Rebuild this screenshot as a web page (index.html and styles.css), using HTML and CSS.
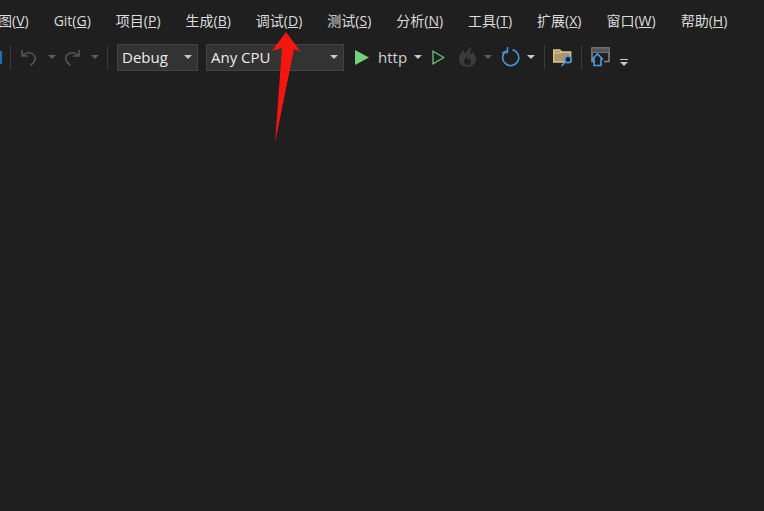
FILE: index.html
```html
<!DOCTYPE html>
<html lang="zh-CN">
<head>
    <meta charset="UTF-8">
    <meta name="viewport" content="width=device-width, initial-scale=1.0">
    <title>Visual Studio</title>
    <link rel="stylesheet" href="styles.css">
</head>
<body>
    <!-- Menu -->
    <nav class="menubar">
        <span class="menu-item">视图(<u>V</u>)</span>
        <span class="menu-item">Git(<u>G</u>)</span>
        <span class="menu-item">项目(<u>P</u>)</span>
        <span class="menu-item">生成(<u>B</u>)</span>
        <span class="menu-item">调试(<u>D</u>)</span>
        <span class="menu-item">测试(<u>S</u>)</span>
        <span class="menu-item">分析(<u>N</u>)</span>
        <span class="menu-item">工具(<u>T</u>)</span>
        <span class="menu-item">扩展(<u>X</u>)</span>
        <span class="menu-item">窗口(<u>W</u>)</span>
        <span class="menu-item">帮助(<u>H</u>)</span>
    </nav>

    <!-- Toolbar -->
    <div class="toolbar">
        <span class="blue-edge"></span>
        <span class="sep sep-first"></span>
        <svg class="icon undo" width="16" height="18" viewBox="0 0 16 18"><path d="M1 2v6h6M1.500 8C4 4.500 9 3.500 12.500 6.500c3 3 2.500 6.500-3 11" fill="none" stroke="#555" stroke-width="1.600"/></svg>
        <span class="caret caret-dim caret-undo"></span>
        <svg class="icon redo" width="16" height="18" viewBox="0 0 16 18"><path d="M15 2v6H9M14.500 8C12 4.500 7 3.500 3.500 6.500c-3 3-2.500 6.500 3 11" fill="none" stroke="#555" stroke-width="1.600"/></svg>
        <span class="caret caret-dim caret-redo"></span>
        <span class="sep sep-undo"></span>
        <div class="select select-debug">
            <span>Debug</span>
            <span class="caret"></span>
        </div>
        <div class="select select-cpu">
            <span>Any CPU</span>
            <span class="caret"></span>
        </div>
        <svg class="icon play" width="14" height="15" viewBox="0 0 14 15"><path d="M0 0l14 7.500L0 15z" fill="#73d17c"/></svg>
        <span class="run-target">http</span>
        <span class="caret caret-http"></span>
        <svg class="icon play-outline" width="13" height="15" viewBox="0 0 13 15"><path d="M1 1.200L11.800 7.500 1 13.800z" fill="none" stroke="#6cc070" stroke-width="1.300"/></svg>
        <svg class="icon flame" width="18" height="20" viewBox="0 0 18 20"><path d="M13 0C8 2 9 5 6 6 5 5 5 4 5 3 1 6 0 9 0 12c0 5 4 8 8 8 5 0 9-3 9-8 0-3-2-5-3-7-1 1-2 2-3 2 0-3 1-5 2-7z" fill="#3b3b3b"/><path d="M8 10c-2 2-3 3-3 5s2 3 4 3 3-2 3-3c0-2-1-3-2-4l-1 2z" fill="#1f1f1f"/></svg>
        <span class="caret caret-dim caret-flame"></span>
        <svg class="icon refresh" width="19" height="20" viewBox="0 0 19 20"><path d="M5.500 3.800a8 8 0 1 0 6-1" fill="none" stroke="#4a94dc" stroke-width="1.600"/><path d="M6.500 0v5.500H1" fill="none" stroke="#4a94dc" stroke-width="1.500"/></svg>
        <span class="caret caret-refresh"></span>
        <span class="sep sep-refresh"></span>
        <svg class="icon folder" width="20" height="19" viewBox="0 0 20 19"><path d="M.7 2h6l2 2h9v10H.7z" fill="#a8986f" stroke="#e2c88e" stroke-width="1.300"/><path d="M1 5h7l1.500-1" fill="none" stroke="#e2c88e"/><circle cx="15" cy="11.500" r="3.200" fill="#1f1f1f" stroke="#4a9cea" stroke-width="1.500"/><path d="M12.500 14l-4 4" stroke="#4a9cea" stroke-width="1.600"/></svg>
        <span class="sep sep-folder"></span>
        <svg class="icon window" width="19" height="20" viewBox="0 0 19 20"><path d="M6 14.500H1V1h17v13.500h-5M1 5h17" fill="none" stroke="#8a8a8a" stroke-width="1.500"/><path d="M1 1.500h17v3.500H1z" fill="#555"/><path d="M1 12.500l5.500-5.500 5.500 5.500M3 11.500v7h7v-7" fill="#1f1f1f" stroke="#4a9cea" stroke-width="1.600"/></svg>
        <span class="overflow">
            <span class="overflow-line"></span>
            <span class="caret"></span>
        </span>
    </div>

    <!-- Flecha roja encima de la captura -->
    <svg class="arrow" width="28" height="112" viewBox="0 0 28 112"><path d="M14 1L29 21 22 18 3 112 10 17 0 20z" fill="#f5170f"/></svg>
</body>
</html>
```

FILE: styles.css
```css
body {
    margin: 0;
    height: 511px;
    overflow: hidden;
    position: relative;
    background-color: #1f1f1f;
    font-family: "Open Sans", "Noto Sans CJK SC", sans-serif;
    color: #dcdcdc;
}

.menubar {
    display: flex;
    gap: 25px;
    height: 42px;
    margin-left: -16px;
    padding-top: 11px;
    box-sizing: border-box;
    font-size: 14px;
    line-height: 20px;
    white-space: nowrap;
}

.toolbar {
    display: flex;
    align-items: center;
    height: 28px;
    margin-top: 1px;
    white-space: nowrap;
}

.icon {
    flex: none;
}

.blue-edge {
    width: 2px;
    height: 13px;
    background-color: #1e6fb8;
}

.sep {
    width: 1px;
    height: 24px;
    background-color: #3a3a3a;
}

.sep-first { margin-left: 8px; }
.sep-undo { margin-left: 8px; }
.sep-refresh { margin-left: 9px; }
.sep-folder { margin-left: 8px; }

.caret {
    width: 0;
    height: 0;
    border-left: 4px solid transparent;
    border-right: 4px solid transparent;
    border-top: 4px solid #c8c8c8;
}

.caret-dim { border-top-color: #5c5c5c; }

.undo { margin-left: 10px; }
.caret-undo { margin-left: 11px; }
.redo { margin-left: 8px; }
.caret-redo { margin-left: 11px; }

.select {
    display: flex;
    align-items: center;
    justify-content: space-between;
    height: 27px;
    box-sizing: border-box;
    padding: 0 5px 0 4px;
    background-color: #333;
    border: 1px solid #434343;
    font-size: 15px;
    color: #ececec;
}

.select-debug {
    width: 81px;
    margin-left: 9px;
}

.select-cpu {
    width: 138px;
    margin-left: 8px;
}

.play { margin-left: 11px; }

.run-target {
    margin-left: 9px;
    font-size: 15px;
    color: #d0d0d0;
}

.caret-http { margin-left: 7px; }
.play-outline { margin-left: 10px; }
.flame { margin-left: 14px; }
.caret-flame { margin-left: 7px; }
.refresh { margin-left: 9px; }
.caret-refresh { margin-left: 7px; }
.folder { margin-left: 8px; }
.window { margin-left: 9px; }

.overflow {
    display: flex;
    flex-direction: column;
    gap: 2px;
    margin-left: 10px;
    margin-top: 10px;
}

.overflow-line {
    width: 8px;
    height: 1px;
    background-color: #c8c8c8;
}

.arrow {
    position: absolute;
    left: 272px;
    top: 31px;
}
```
